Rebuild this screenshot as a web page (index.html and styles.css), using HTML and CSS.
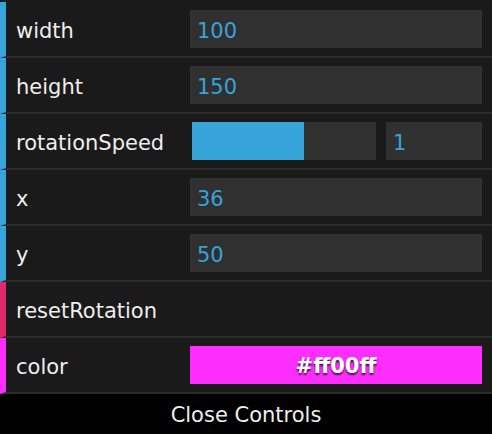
FILE: index.html
```html
<!DOCTYPE html>
<html>
<head>
<meta charset="utf-8">
<link rel="stylesheet" href="styles.css">
</head>
<body>
<div class="gui">
  <ul class="rows">
    <li class="cr number">
      <span class="name">width</span>
      <div class="c"><div class="field">100</div></div>
    </li>
    <li class="cr number">
      <span class="name">height</span>
      <div class="c"><div class="field">150</div></div>
    </li>
    <li class="cr number">
      <span class="name">rotationSpeed</span>
      <div class="c">
        <div class="slider"><div class="fg" style="width:61%"></div></div>
        <div class="field small">1</div>
      </div>
    </li>
    <li class="cr number">
      <span class="name">x</span>
      <div class="c"><div class="field">36</div></div>
    </li>
    <li class="cr number">
      <span class="name">y</span>
      <div class="c"><div class="field">50</div></div>
    </li>
    <li class="cr function">
      <span class="name">resetRotation</span>
    </li>
    <li class="cr color">
      <span class="name">color</span>
      <div class="c"><div class="swatch">#ff00ff</div></div>
    </li>
  </ul>
  <div class="close">Close Controls</div>
</div>
</body>
</html>
```
FILE: styles.css
```css
html, body {
  margin: 0;
  padding: 0;
  background: #1a1a1a;
}
.gui {
  width: 492px;
  padding-top: 2px;
  background: #1a1a1a;
  font-family: "DejaVu Sans", "Liberation Sans", sans-serif;
  font-size: 21px;
  color: #eeeeee;
}
.rows {
  list-style: none;
  margin: 0;
  padding: 0;
}
.cr {
  display: flex;
  align-items: center;
  height: 54px;
  border-bottom: 2px solid #2c2c2c;
  border-left: 6px solid #36a4d8;
  padding: 0 10px 0 10px;
  background: #1a1a1a;
}
.cr.function {
  border-left-color: #e2276a;
}
.cr.color {
  border-left-color: #fd2efd;
}
.name {
  width: 174px;
  flex: none;
  white-space: nowrap;
  padding-top: 4px;
}
.c {
  flex: 1;
  display: flex;
  align-items: center;
  gap: 10px;
}
.field {
  flex: 1;
  height: 38px;
  line-height: 42px;
  background: #303030;
  color: #36a4d8;
  padding-left: 7px;
  box-sizing: border-box;
  overflow: hidden;
}
.field.small {
  flex: none;
  width: 96px;
}
.slider {
  width: 184px;
  height: 38px;
  margin-left: 2px;
  background: #303030;
  flex: none;
}
.slider .fg {
  height: 100%;
  background: #36a4d8;
}
.swatch {
  flex: 1;
  height: 38px;
  line-height: 40px;
  background: #fd2efd;
  color: #ffffff;
  text-align: center;
  font-weight: bold;
  text-shadow: 0 2px 2px rgba(0, 0, 0, 0.7);
  overflow: hidden;
}
.close {
  height: 40px;
  line-height: 42px;
  background: #000000;
  text-align: center;
  color: #eeeeee;
  overflow: hidden;
}
```
